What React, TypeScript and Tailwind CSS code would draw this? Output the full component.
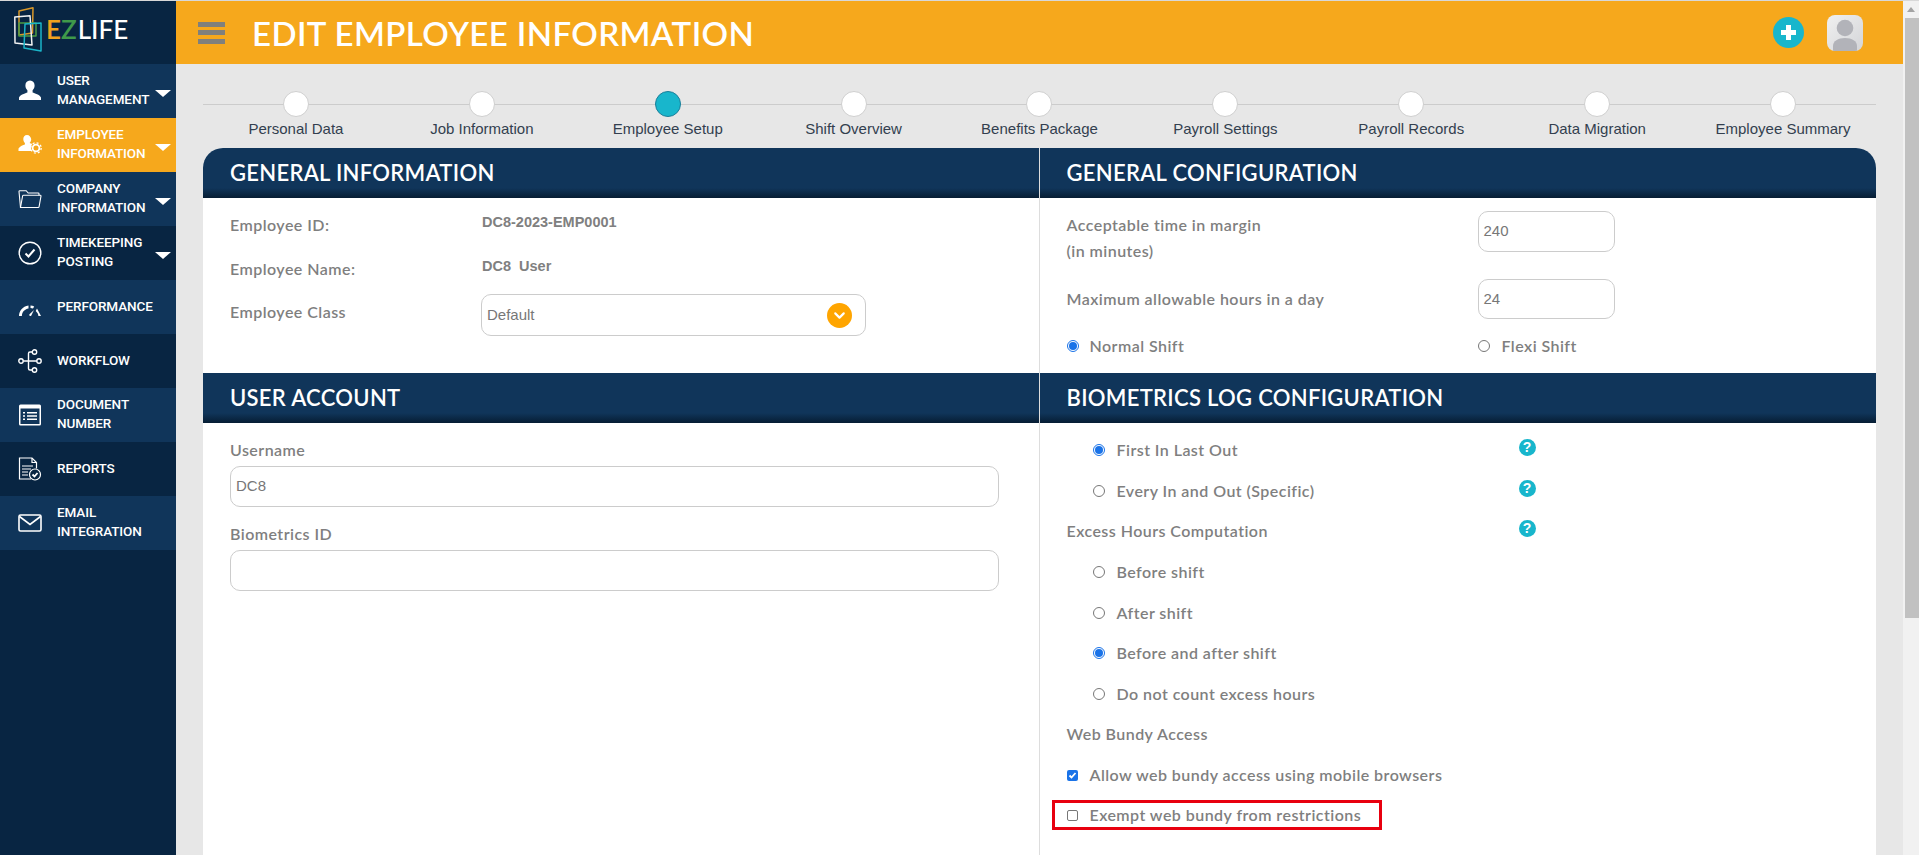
import React from 'react';
import { ChevronDown } from 'lucide-react';

const navItems = [
  { lines: ['USER', 'MANAGEMENT'], icon: 'user', caret: true, bg: 'bg-[#10355a]' },
  { lines: ['EMPLOYEE', 'INFORMATION'], icon: 'usergear', caret: true, bg: 'bg-[#f6a81c]' },
  { lines: ['COMPANY', 'INFORMATION'], icon: 'folder', caret: true, bg: 'bg-[#10355a]' },
  { lines: ['TIMEKEEPING', 'POSTING'], icon: 'check', caret: true, bg: 'bg-[#082542]' },
  { lines: ['PERFORMANCE'], icon: 'gauge', caret: false, bg: 'bg-[#10355a]' },
  { lines: ['WORKFLOW'], icon: 'flow', caret: false, bg: 'bg-[#082542]' },
  { lines: ['DOCUMENT', 'NUMBER'], icon: 'list', caret: false, bg: 'bg-[#10355a]' },
  { lines: ['REPORTS'], icon: 'report', caret: false, bg: 'bg-[#082542]' },
  { lines: ['EMAIL', 'INTEGRATION'], icon: 'mail', caret: false, bg: 'bg-[#10355a]' },
];

const steps = [
  'Personal Data',
  'Job Information',
  'Employee Setup',
  'Shift Overview',
  'Benefits Package',
  'Payroll Settings',
  'Payroll Records',
  'Data Migration',
  'Employee Summary',
];

const NavIcon = ({ name }: { name: string }) => {
  const common = { width: 24, height: 24, viewBox: '0 0 24 24', fill: 'none', stroke: 'white', strokeWidth: 1.4 };
  switch (name) {
    case 'user':
      return (
        <svg {...common} stroke="none" fill="white">
          <path d="M12 1.500c-3 0-4.600 2.200-4.600 5 0 2 .8 3.700 2 4.800v2.200c-2 1-7 1.900-8.400 5v2.500h22v-2.500c-1.400-3.100-6.400-4-8.400-5v-2.200c1.200-1.100 2-2.800 2-4.800 0-2.800-1.600-5-4.600-5z" />
        </svg>
      );
    case 'usergear':
      return (
        <svg {...common} stroke="none" fill="white">
          <path d="M9 2c-2.400 0-3.700 1.800-3.700 4 0 1.600.6 3 1.600 3.900v1.700c-1.600.8-5 1.500-6.400 4v2.400h13.500c-.7-.9-1.100-2-1.100-3.200 0-1.500.6-2.800 1.500-3.700-1-.3-2-.6-2.800-1v-.2c1-.9 1.600-2.300 1.600-3.900C12.700 3.800 11.400 2 9 2z" />
          <circle cx="18" cy="15" r="3.400" fill="none" stroke="white" strokeWidth="1.800" />
          <circle cx="18" cy="15" r="5.200" fill="none" stroke="white" strokeWidth="1.300" strokeDasharray="2 2.080" />
        </svg>
      );
    case 'folder':
      return (
        <svg {...common} strokeWidth={1.1}>
          <path d="M2.500 20.500 1 4.500c0-.5.3-.8.8-.8h6.400l2 2.300h10c.5 0 .8.300.8.800v1.500" />
          <path d="M2.500 20.500h17.700c.5 0 .8-.3.900-.8L23 9c0-.5-.3-.8-.8-.8H5.500c-.5 0-.8.300-.9.800z" />
        </svg>
      );
    case 'check':
      return (
        <svg {...common}>
          <circle cx="12" cy="12" r="10.800" />
          <path d="m7.500 12.500 3 3 6-7" strokeWidth="2" />
        </svg>
      );
    case 'gauge':
      return (
        <svg {...common} stroke="none" fill="white">
          <path d="M1 21c0-5 3.500-9.500 9.500-10.500v3C6.500 14.200 4 17 3.900 21z" />
          <path d="M12.500 10.500c1.400 0 2.600.3 3.700.9l-1.200 2.100c-.8-.3-1.600-.5-2.500-.6z" />
          <path d="m19 13.500 4 7.500h-2.600c-.2-2-1-3.500-2.700-5z" />
          <path d="m16 15-4.500 4.200c-.6.700-.2 1.800.8 1.800.5 0 .8-.2 1-.6z" />
        </svg>
      );
    case 'flow':
      return (
        <svg {...common}>
          <circle cx="3" cy="12" r="2.200" />
          <circle cx="16.500" cy="3" r="2.200" />
          <circle cx="21" cy="12" r="2.200" />
          <circle cx="16.500" cy="21" r="2.200" />
          <path d="M5.200 12h13.600M14.300 3H12c-.8 0-1.500.7-1.500 1.500v15c0 .8.700 1.500 1.500 1.500h2.300" />
        </svg>
      );
    case 'list':
      return (
        <svg {...common} stroke="none">
          <rect x="1" y="1.500" width="22" height="21" rx="1.500" fill="white" />
          <rect x="2.500" y="5.500" width="19" height="15.500" fill="#10355a" />
          <path d="M5 9h2v1.500H5zM9 9h10v1.500H9zM5 12.300h2v1.500H5zM9 12.300h10v1.500H9zM5 15.600h2v1.500H5zM9 15.600h10v1.500H9z" fill="white" />
        </svg>
      );
    case 'report':
      return (
        <svg {...common} strokeWidth={1.2}>
          <path d="M13 22H1.500V1h12.500l4.500 4.500v6" />
          <path d="M14 1v4.500h4.500" />
          <path d="M4 9h11M4 12h9M4 15h6M4 18h6" />
          <circle cx="17" cy="17.500" r="5.500" />
          <path d="m14.500 17.500 2 2 3-3.500" strokeWidth="1.800" />
        </svg>
      );
    default:
      return (
        <svg {...common} strokeWidth={1.6}>
          <rect x="1" y="4" width="22" height="16" rx="1.500" />
          <path d="m1.500 5.500 10.500 8 10.500-8" />
        </svg>
      );
  }
};

const Logo = () => (
  <div className="h-[63px] flex items-start bg-[#082542]">
    <svg width="28" height="45" viewBox="0 0 28 45" fill="none" strokeWidth="1.500" strokeLinejoin="round" className="ml-[14px] mt-[6px] shrink-0">
      <path d="M5 4 19 .8 18.500 26 5 28z" stroke="#d9982a" />
      <path d="M5 16h17v13H5z" stroke="#4a9a44" />
      <path d="M.8 10 16 8.800 18 38 1 36z" stroke="#f2f2f2" />
      <path d="M11 17 27 16 27 44 10 41z" stroke="#1ab4c8" />
    </svg>
    <div className="ml-[4px] mt-[15px] text-[26px] leading-[26px] font-semibold font-['Lato',sans-serif] flex items-baseline">
      <span className="text-[#f2a21e]">E</span>
      <span className="text-[#3f9a4a] mr-[1px]">Z</span>
      <span className="text-white font-medium">LIFE</span>
    </div>
  </div>
);

const Sidebar = () => (
  <aside className="w-[176px] shrink-0 bg-[#082542] flex flex-col">
    <Logo />
    {navItems.map((item) => (
      <div key={item.lines.join(' ')} className={`h-[54px] flex items-center pl-[18px] relative ${item.bg}`}>
        <div className="w-[39px] shrink-0 flex">
          <NavIcon name={item.icon} />
        </div>
        <div className="text-white text-[13.500px] leading-[19px] font-medium font-['Roboto',sans-serif] tracking-[-0.1px] pb-[2px]">
          {item.lines.map((line) => (
            <div key={line}>{line}</div>
          ))}
        </div>
        {item.caret && (
          <div className="absolute right-[5px] top-[26px] w-0 h-0 border-l-[8px] border-r-[8px] border-t-[7px] border-l-transparent border-r-transparent border-t-white" />
        )}
      </div>
    ))}
  </aside>
);

const Header = () => (
  <header className="h-[63px] shrink-0 bg-[#f6a81c] flex items-center pl-[22px] pr-[40px]">
    <div className="w-[27px] flex flex-col gap-[3.500px] shrink-0">
      <div className="h-[5px] bg-[#80807c]" />
      <div className="h-[5px] bg-[#80807c]" />
      <div className="h-[5px] bg-[#80807c]" />
    </div>
    <h1 className="ml-[27px] pt-[2px] text-white text-[33px] font-semibold font-['Lato',sans-serif] tracking-[0.4px] whitespace-nowrap">
      EDIT EMPLOYEE INFORMATION
    </h1>
    <div className="ml-auto w-[31px] h-[31px] rounded-full bg-[#18b6cc] flex items-center justify-center">
      <svg width="15" height="15" viewBox="0 0 15 15" fill="white">
        <path d="M5 0h5v5h5v5h-5v5H5v-5H0V5h5z" />
      </svg>
    </div>
    <div className="ml-[23px] w-[36px] h-[36px] rounded-[8px] bg-gradient-to-br from-[#f0f0f0] to-[#d4d5d8] overflow-hidden flex justify-center">
      <svg width="26" height="36" viewBox="0 0 26 36" fill="#b2b3b9">
        <circle cx="13" cy="13" r="8.300" />
        <path d="M1 36v-5c0-5 5-8 12-8s12 3 12 8v5z" />
      </svg>
    </div>
  </header>
);

const Stepper = () => (
  <div className="h-[84px] shrink-0 mx-[27px] relative">
    <div className="absolute left-0 right-0 top-[40px] h-[1px] bg-[#cccccc]" />
    <div className="grid grid-cols-9 pt-[27px] relative">
      {steps.map((step, i) => (
        <div key={step} className="flex flex-col items-center">
          <div className={`w-[26px] h-[26px] rounded-full border ${i === 2 ? 'bg-[#18b6cc] border-[#1a7f9a]' : 'bg-white border-[#cfcfcf]'}`} />
          <div className="mt-[2px] text-[15px] leading-[20px] text-[#333f4f] font-['Liberation_Sans',sans-serif] whitespace-nowrap">
            {step}
          </div>
        </div>
      ))}
    </div>
  </div>
);

const SectionHeader = ({ title, className = '' }: { title: string; className?: string }) => (
  <div className={`h-[50px] flex items-center pl-[27px] pb-[2px] bg-[linear-gradient(to_bottom,#10355a_0,#10355a_80%,#061d33_100%)] text-white text-[22px] font-semibold font-['Lato',sans-serif] tracking-[0.3px] whitespace-nowrap ${className}`}>
    {title}
  </div>
);

const labelCls = "text-[16px] tracking-[0.45px] font-semibold text-[#7f7f7f] font-['Lato',sans-serif] whitespace-nowrap";
const fieldCls = "border border-[#cccccc] rounded-[10px] bg-white flex items-center pl-[5px] text-[15px] text-[#777777] font-['Liberation_Sans',sans-serif]";

const Radio = ({ on = false }: { on?: boolean }) => (
  <span className={`w-[12px] h-[12px] rounded-full shrink-0 flex items-center justify-center border ${on ? 'border-[#1a73e8]' : 'border-[#777777]'}`}>
    {on && <span className="w-[8px] h-[8px] rounded-full bg-[#1a73e8]" />}
  </span>
);

const Help = () => (
  <span className="w-[17px] h-[17px] rounded-full bg-[#18b6cc] text-white text-[14px] leading-[17px] font-bold text-center font-['Liberation_Sans',sans-serif]">?</span>
);

const RadioRow = ({ label, on, help }: { label: string; on?: boolean; help?: boolean }) => (
  <div className="h-[40.600px] flex items-center pl-[26px] relative">
    <Radio on={on} />
    <span className={`ml-[12px] ${labelCls}`}>{label}</span>
    {help && (
      <span className="absolute left-[452px] top-[9px] flex">
        <Help />
      </span>
    )}
  </div>
);

const Content = () => (
  <div className="mx-[27px] flex-1 bg-white rounded-t-[20px] overflow-hidden grid grid-cols-2 grid-rows-[225px_1fr]">
    <section className="border-r border-[#dddddd]">
      <SectionHeader title="GENERAL INFORMATION" />
      <div className="pl-[27px] pt-[5px] relative">
        {[
          ['Employee ID:', 'DC8-2023-EMP0001'],
          ['Employee Name:', 'DC8\u00a0 User'],
        ].map(([k, v]) => (
          <div key={k} className="h-[44px] flex items-start pt-[10px]">
            <span className={`w-[252px] ${labelCls}`}>{k}</span>
            <span className="text-[14.500px] font-bold text-[#808080] font-['Liberation_Sans',sans-serif] -mt-[1px]">{v}</span>
          </div>
        ))}
        <div className="flex items-start mt-[3px]">
          <span className={`w-[251px] pt-[6px] ${labelCls}`}>Employee Class</span>
          <div className={`w-[385px] h-[42px] pr-[13px] justify-between ${fieldCls}`}>
            Default
            <span className="w-[25px] h-[25px] rounded-full bg-[#ffa500] flex items-center justify-center">
              <ChevronDown size={17} color="white" strokeWidth={3} />
            </span>
          </div>
        </div>
      </div>
    </section>
    <section>
      <SectionHeader title="GENERAL CONFIGURATION" />
      <div className="pl-[27px] pt-[13px]">
        <div className="flex h-[53px]">
          <div className={`w-[411px] leading-[26px] pt-[1px] ${labelCls}`}>
            Acceptable time in margin
            <br />
            (in minutes)
          </div>
          <div className={`w-[137px] h-[41px] ${fieldCls}`}>240</div>
        </div>
        <div className="flex items-center mt-[15px]">
          <div className={`w-[411px] ${labelCls}`}>Maximum allowable hours in a day</div>
          <div className={`w-[137px] h-[40px] ${fieldCls}`}>24</div>
        </div>
        <div className="flex items-center mt-[15px]">
          <div className="w-[411px] flex items-center">
            <Radio on />
            <span className={`ml-[11px] ${labelCls}`}>Normal Shift</span>
          </div>
          <Radio />
          <span className={`ml-[12px] ${labelCls}`}>Flexi Shift</span>
        </div>
      </div>
    </section>
    <section className="border-r border-[#dddddd]">
      <SectionHeader title="USER ACCOUNT" />
      <div className="pl-[27px] pr-[40px] pt-[15px]">
        <div className={`h-[23px] ${labelCls}`}>Username</div>
        <div className={`h-[41px] mt-[5px] ${fieldCls}`}>DC8</div>
        <div className={`h-[23px] mt-[15px] ${labelCls}`}>Biometrics ID</div>
        <div className={`h-[41px] mt-[5px] ${fieldCls}`} />
      </div>
    </section>
    <section>
      <SectionHeader title="BIOMETRICS LOG CONFIGURATION" />
      <div className="pl-[27px] pt-[7px]">
        <RadioRow label="First In Last Out" on help />
        <RadioRow label="Every In and Out (Specific)" help />
        <div className="h-[40.600px] flex items-center relative">
          <span className={labelCls}>Excess Hours Computation</span>
          <span className="absolute left-[452px] top-[9px] flex">
            <Help />
          </span>
        </div>
        <RadioRow label="Before shift" />
        <RadioRow label="After shift" />
        <RadioRow label="Before and after shift" on />
        <RadioRow label="Do not count excess hours" />
        <div className={`h-[40.600px] flex items-center ${labelCls}`}>Web Bundy Access</div>
        <div className="h-[40.600px] flex items-center">
          <span className="w-[11px] h-[11px] rounded-[2px] bg-[#1a73e8] flex items-center justify-center shrink-0">
            <svg width="9" height="9" viewBox="0 0 9 9" fill="none" stroke="white" strokeWidth="1.800">
              <path d="m1.500 4.500 2 2 4-4.500" />
            </svg>
          </span>
          <span className={`ml-[12px] ${labelCls}`}>Allow web bundy access using mobile browsers</span>
        </div>
        <div className="h-[30px] w-[330px] -ml-[15px] mt-[5px] border-[3px] border-[#e8000f] flex items-center pl-[12px]">
          <span className="w-[11px] h-[11px] rounded-[2px] border border-[#777777] shrink-0" />
          <span className={`ml-[12px] ${labelCls}`}>Exempt web bundy from restrictions</span>
        </div>
      </div>
    </section>
  </div>
);

export default function App() {
  return (
    <div className="h-[855px] w-full overflow-hidden flex flex-col bg-[#e7e7e7]">
      <div className="h-[1px] bg-[#d8d8d8] shrink-0" />
      <div className="flex flex-1 min-h-0">
        <Sidebar />
        <main className="flex-1 flex flex-col min-w-0">
          <Header />
          <Stepper />
          <Content />
        </main>
        <div className="w-[16px] shrink-0 bg-[#f1f1f1] flex flex-col items-center">
          <div className="h-[17px] w-full flex items-center justify-center">
            <div className="w-0 h-0 border-l-[4px] border-r-[4px] border-b-[5px] border-l-transparent border-r-transparent border-b-[#a3a3a3]" />
          </div>
          <div className="w-[14px] h-[600px] bg-[#c1c1c1] ml-[2px]" />
        </div>
      </div>
    </div>
  );
}
